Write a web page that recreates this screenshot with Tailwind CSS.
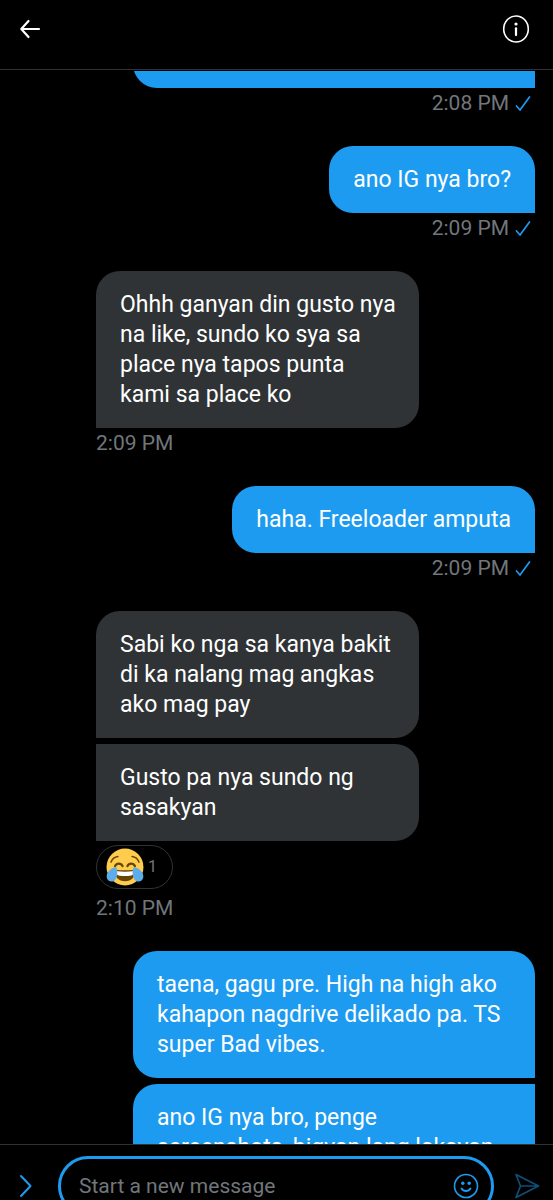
<!DOCTYPE html>
<html lang="fil">
<head>
<meta charset="utf-8">
<meta name="viewport" content="width=device-width, initial-scale=1">
<title>Messages</title>
<script src="https://cdn.jsdelivr.net/npm/@tailwindcss/browser@4"></script>
</head>
<body class="bg-black text-white font-['Roboto','Liberation_Sans',sans-serif]">
<svg class="hidden" aria-hidden="true">
  <symbol id="check" viewBox="0 0 16 18"><path d="M1.500 12 5 16 14.500 3" fill="none" stroke="#1d9bf0" stroke-width="1.700" stroke-linecap="round" stroke-linejoin="round"/></symbol>
</svg>
<div class="flex h-screen flex-col overflow-hidden">
  <header class="mb-px flex h-[70px] shrink-0 items-start justify-between border-b border-[#2f3336] pl-[18px] pr-[23px] pt-[15px]">
    <button type="button" aria-label="Back" class="flex size-[28px] items-center justify-center">
      <svg class="size-[28px]" viewBox="0 0 28 28" fill="none" stroke="#fff" stroke-width="2.200" stroke-linecap="round" stroke-linejoin="round"><path d="M10.500 6 3.300 14l7.200 8M4 14h17"/></svg>
    </button>
    <button type="button" aria-label="Conversation info" class="flex size-[28px] items-center justify-center">
      <svg class="size-[28px]" viewBox="0 0 28 28" fill="none"><ellipse cx="14" cy="14" rx="12.300" ry="13" stroke="#fff" stroke-width="1.600"/><circle cx="14" cy="9" r="1.600" fill="#fff"/><path d="M14 13.300v6.800" stroke="#fff" stroke-width="2.200" stroke-linecap="round"/></svg>
    </button>
  </header>

  <main class="flex min-h-0 flex-1 flex-col justify-start overflow-hidden pl-[96px] pr-[18px] text-[23px] leading-[30px]">
    <section class="mb-7 flex shrink-0 flex-col items-end">
      <div class="flex h-[17px] w-full max-w-[402px] items-end overflow-hidden"><div class="h-[67px] w-full shrink-0 rounded-l-[24px] bg-[#1d9bf0]"></div></div>
      <p class="flex h-[30px] items-center gap-[6px] pr-[4px] text-[21px] text-[#71767b]"><time>2:08 PM</time><svg class="h-[18px] w-[16px]" role="img" aria-label="Seen"><use href="#check"/></svg></p>
    </section>

    <section class="mb-7 flex shrink-0 flex-col items-end">
      <p class="rounded-[24px] rounded-br-none bg-[#1d9bf0] px-6 pt-[19px] pb-[18px]">ano IG nya bro?</p>
      <p class="flex h-[30px] items-center gap-[6px] pr-[4px] text-[21px] text-[#71767b]"><time>2:09 PM</time><svg class="h-[18px] w-[16px]" role="img" aria-label="Seen"><use href="#check"/></svg></p>
    </section>

    <section class="mb-7 flex shrink-0 flex-col items-start">
      <p class="w-full max-w-[323px] rounded-[24px] rounded-bl-none bg-[#2f3336] pl-6 pr-4 pt-[19px] pb-[18px]">Ohhh ganyan din gusto nya<br>na like, sundo ko sya sa<br>place nya tapos punta<br>kami sa place ko</p>
      <p class="flex h-[30px] items-center text-[21px] text-[#71767b]"><time>2:09 PM</time></p>
    </section>

    <section class="mb-7 flex shrink-0 flex-col items-end">
      <p class="rounded-[24px] rounded-br-none bg-[#1d9bf0] px-6 pt-[19px] pb-[18px]">haha. Freeloader amputa</p>
      <p class="flex h-[30px] items-center gap-[6px] pr-[4px] text-[21px] text-[#71767b]"><time>2:09 PM</time><svg class="h-[18px] w-[16px]" role="img" aria-label="Seen"><use href="#check"/></svg></p>
    </section>

    <section class="mb-7 flex shrink-0 flex-col items-start">
      <p class="mb-[6px] w-full max-w-[323px] rounded-[24px] rounded-bl-none bg-[#2f3336] pl-6 pr-4 pt-[19px] pb-[18px]">Sabi ko nga sa kanya bakit<br>di ka nalang mag angkas<br>ako mag pay</p>
      <p class="w-full max-w-[323px] rounded-r-[24px] bg-[#2f3336] pl-6 pr-4 pt-[19px] pb-[18px]">Gusto pa nya sundo ng<br>sasakyan</p>
      <button type="button" aria-label="1 laughing reaction" class="my-1 flex h-[44px] w-[77px] items-center gap-1 rounded-full border border-[#2f3336] pl-[9px] text-[16px] leading-[20px] text-[#71767b]">
        <svg class="size-[38px] shrink-0" viewBox="0 0 36 36"><circle cx="18" cy="18" r="17.500" fill="#ffcc4d"/><path d="M4.800 13.200c1-2.700 3.300-4.800 6.500-5.200M31.200 13.200c-1-2.700-3.300-4.800-6.500-5.200" fill="none" stroke="#664500" stroke-width="1.500" stroke-linecap="round"/><path d="M8.500 17.200c1.600-3.200 5.700-3.200 7.300 0M20.200 17.200c1.600-3.200 5.700-3.200 7.300 0" fill="none" stroke="#664500" stroke-width="2" stroke-linecap="round"/><path d="M8 21.500c0-.8.600-1 1.200-.9 5.800.7 11.800.7 17.600 0 .6-.1 1.200.1 1.200.9C28 27 24 31.500 18 31.500S8 27 8 21.500Z" fill="#664500"/><path d="M9.500 21.800c5.600.8 11.400.8 17 0 0 2.500-1 4-2.500 4.200-4 .7-8 .7-12 0-1.500-.2-2.500-1.700-2.500-4.200Z" fill="#fff"/><path d="M9.600 18.300c-2.300-.5-6.600 2.200-8.300 5.700-1.300 2.800-.8 5.700 1.300 7.100 2.200 1.400 5.200.7 6.700-1.800 2-3.400 1.800-8.800.3-11ZM26.400 18.300c2.300-.5 6.600 2.200 8.300 5.700 1.300 2.800.8 5.700-1.300 7.100-2.200 1.400-5.200.7-6.700-1.800-2-3.400-1.800-8.800-.3-11Z" fill="#5dadec"/></svg>
        <span>1</span>
      </button>
      <p class="flex h-[30px] items-center text-[21px] text-[#71767b]"><time>2:10 PM</time></p>
    </section>

    <section class="flex shrink-0 flex-col items-end">
      <p class="mb-[6px] w-full max-w-[402px] rounded-[24px] rounded-br-none bg-[#1d9bf0] pl-6 pr-4 pt-[19px] pb-[18px]">taena, gagu pre. High na high ako<br>kahapon nagdrive delikado pa. TS<br>super Bad vibes.</p>
      <p class="w-full max-w-[402px] rounded-l-[24px] bg-[#1d9bf0] pl-6 pr-4 pt-[19px] pb-[18px]">ano IG nya bro, penge<br>screenshots, bigyan lang lakayan</p>
    </section>
  </main>

  <footer class="h-[56px] shrink-0 overflow-hidden border-t border-[#2f3336]">
    <form class="flex items-center gap-[20px] pl-[17px] pr-[13px] pt-[11px]">
      <button type="button" aria-label="Expand" class="flex h-[60px] w-[21px] items-center justify-start"><svg class="h-[24px] w-[16px]" viewBox="0 0 16 24" fill="none" stroke="#1d9bf0" stroke-width="2" stroke-linecap="round" stroke-linejoin="round"><path d="M4 2l9.500 10L4 22"/></svg></button>
      <div class="flex h-[60px] min-w-0 flex-1 items-center rounded-full border-[3px] border-[#1d9bf0] pl-[18px] pr-[12px]">
        <input type="text" aria-label="Start a new message" placeholder="Start a new message" class="min-w-0 flex-1 bg-transparent text-[21px] leading-[30px] text-white outline-none placeholder:text-[#71767b]">
        <button type="button" aria-label="Emoji"><svg class="size-[26px]" viewBox="0 0 26 26" fill="none"><circle cx="13" cy="13" r="11.500" stroke="#1d9bf0" stroke-width="1.600"/><circle cx="9.800" cy="10.200" r="1.700" fill="#1d9bf0"/><circle cx="16.200" cy="10.200" r="1.700" fill="#1d9bf0"/><path d="M8.500 15.500c2 3.300 7 3.300 9 0" stroke="#1d9bf0" stroke-width="1.800" stroke-linecap="round"/></svg></button>
      </div>
      <button type="submit" aria-label="Send" disabled class="opacity-50"><svg class="size-[26px]" viewBox="0 0 26 26" fill="none" stroke="#1d9bf0" stroke-width="1.700" stroke-linejoin="round"><path d="M2 1.500 24.500 13 2 24.500 6.500 13ZM6.500 13h18"/></svg></button>
    </form>
  </footer>
</div>
</body>
</html>
